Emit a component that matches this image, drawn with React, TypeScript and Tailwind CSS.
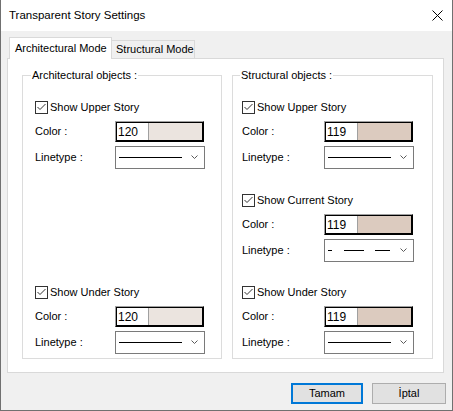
import type { ReactNode } from 'react';

const FONT = "font-['Liberation_Sans',Arial,sans-serif]";

function CheckRow({ label }: { label: string }) {
  return (
    <label className="flex h-[14px] items-center gap-[2px]">
      <span className="flex h-[13px] w-[13px] shrink-0 items-center justify-center border border-[#333333] bg-white">
        <svg width="11" height="11" viewBox="0 0 11 11">
          <path d="M1.5 5 L4 7.5 L9.5 2" fill="none" stroke="#333333" strokeWidth="1" />
        </svg>
      </span>
      <span className="leading-[14px]">{label}</span>
    </label>
  );
}

function FieldRow({ label, labelWidth, children }: { label: string; labelWidth: string; children: ReactNode }) {
  return (
    <div className="flex items-center">
      <span className={`${labelWidth} shrink-0`}>{label}</span>
      {children}
    </div>
  );
}

function ColorBox({ value, swatch }: { value: string; swatch: string }) {
  return (
    <div className="flex h-[21px] w-[89px] border border-t-[#a0a0a0] border-r-black border-b-black border-l-[#a0a0a0]">
      <div className="flex flex-1 border border-black">
        <div className="flex w-[32px] items-center border-r border-[#a0a0a0] bg-white pl-[1px] text-[12px] leading-none">
          {value}
        </div>
        <div className={`flex-1 ${swatch}`} />
      </div>
    </div>
  );
}

function LinetypeBox({ dashed = false }: { dashed?: boolean }) {
  return (
    <div className="flex h-[23px] w-[90px] items-center justify-between border border-[#7a7a7a] bg-white pr-[6px] pl-[2px]">
      <svg width="64" height="3" viewBox="0 0 64 3">
        {dashed ? (
          <g stroke="black" strokeWidth="1">
            <line x1="1" y1="1.5" x2="5" y2="1.5" />
            <line x1="17" y1="1.5" x2="37" y2="1.5" />
            <line x1="48" y1="1.5" x2="63" y2="1.5" />
          </g>
        ) : (
          <line x1="1" y1="1.5" x2="64" y2="1.5" stroke="black" strokeWidth="1" />
        )}
      </svg>
      <svg width="7" height="5" viewBox="0 0 7 5">
        <path d="M0.5 0.5 L3.5 3.5 L6.5 0.5" fill="none" stroke="#5a5a5a" strokeWidth="1" />
      </svg>
    </div>
  );
}

function StorySection({
  label,
  value,
  swatch,
  labelWidth,
  dashed,
  className = '',
}: {
  label: string;
  value: string;
  swatch: string;
  labelWidth: string;
  dashed?: boolean;
  className?: string;
}) {
  return (
    <div className={`flex flex-col ${className}`}>
      <CheckRow label={label} />
      <div className="mt-[7px]">
        <FieldRow label="Color :" labelWidth={labelWidth}>
          <ColorBox value={value} swatch={swatch} />
        </FieldRow>
      </div>
      <div className="mt-[4px]">
        <FieldRow label="Linetype :" labelWidth={labelWidth}>
          <LinetypeBox dashed={dashed} />
        </FieldRow>
      </div>
    </div>
  );
}

export default function App() {
  return (
    <div className={`${FONT} flex h-[411px] w-[453px] flex-col border-r border-b border-l border-[#707070] bg-[#f0f0f0] text-[11px] text-black`}>
      <div className="flex h-[31px] shrink-0 items-center justify-between bg-white pr-[9px] pl-[8px]">
        <span className="text-[11.5px]">Transparent Story Settings</span>
        <svg width="11" height="11" viewBox="0 0 11 11">
          <path d="M0.5 0.5 L10.5 10.5 M10.5 0.5 L0.5 10.5" stroke="black" strokeWidth="1" />
        </svg>
      </div>

      <div className="flex flex-col pt-[6px] pl-[6px]">
        <div className="ml-[2px] flex items-end">
          <div className="relative z-10 mb-[-1px] flex h-[22px] w-[103px] items-center border-t border-r border-l border-[#d9d9d9] bg-white pb-[1px] pl-[5px]">
            Architectural Mode
          </div>
          <div className="flex h-[18px] w-[83px] items-center border-t border-r border-[#d9d9d9] pl-[4px]">
            Structural Mode
          </div>
        </div>

        <div className="flex h-[315px] w-[437px] gap-[10px] border border-[#d9d9d9] bg-white pt-[10px] pr-[10px] pl-[14px]">
          <fieldset className="flex h-[290px] w-[200px] flex-col border border-[#dcdcdc]">
            <legend className="ml-[8px] px-[1px] leading-[13px]">Architectural objects :</legend>
            <div className="flex flex-1 flex-col pb-[4px] pl-[12px]">
              <StorySection
                className="mt-[18px]"
                label="Show Upper Story"
                value="120"
                swatch="bg-[#ebe4df]"
                labelWidth="w-[80px]"
              />
              <StorySection
                className="mt-auto"
                label="Show Under Story"
                value="120"
                swatch="bg-[#ebe4df]"
                labelWidth="w-[80px]"
              />
            </div>
          </fieldset>

          <fieldset className="flex h-[290px] w-[201px] flex-col border border-[#dcdcdc]">
            <legend className="ml-[7px] px-[1px] leading-[13px]">Structural objects :</legend>
            <div className="flex flex-1 flex-col pb-[4px] pl-[9px]">
              <StorySection
                className="mt-[18px]"
                label="Show Upper Story"
                value="119"
                swatch="bg-[#dccbbf]"
                labelWidth="w-[82px]"
              />
              <StorySection
                className="mt-[24px]"
                label="Show Current Story"
                value="119"
                swatch="bg-[#dccbbf]"
                labelWidth="w-[82px]"
                dashed
              />
              <StorySection
                className="mt-auto"
                label="Show Under Story"
                value="119"
                swatch="bg-[#dccbbf]"
                labelWidth="w-[82px]"
              />
            </div>
          </fieldset>
        </div>
      </div>

      <div className="mt-[10px] flex justify-end gap-[9px] pr-[6px]">
        <button className="flex h-[21px] w-[72px] items-center justify-center border-2 border-[#0078d7] bg-[#e1e1e1]">
          Tamam
        </button>
        <button className="flex h-[21px] w-[74px] items-center justify-center border border-[#adadad] bg-[#e1e1e1]">
          İptal
        </button>
      </div>
    </div>
  );
}
